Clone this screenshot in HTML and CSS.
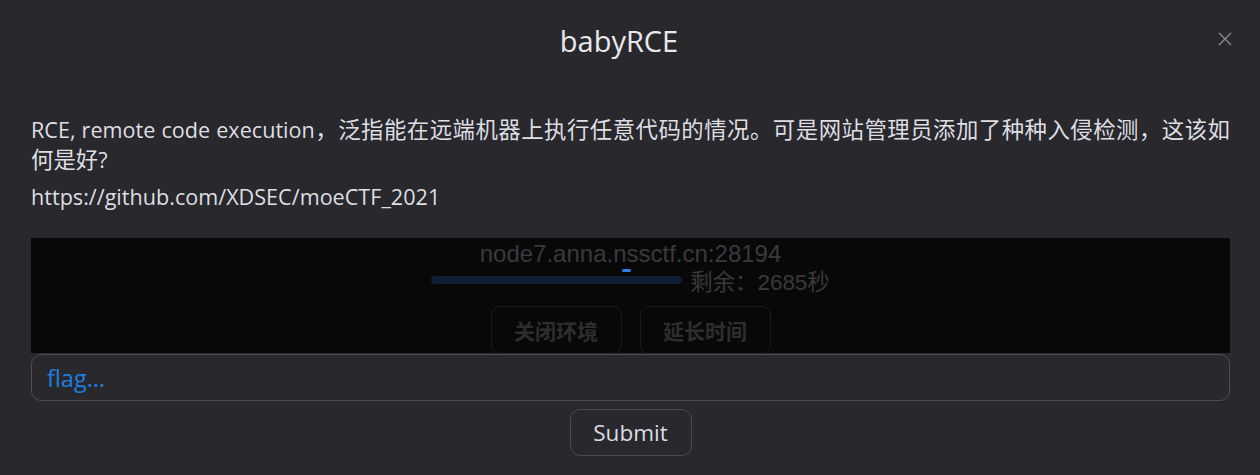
FILE: index.html
```html
<!DOCTYPE html>
<html lang="zh">
<head>
<meta charset="utf-8">
<title>babyRCE</title>
<link rel="stylesheet" href="styles.css">
</head>
<body>
<div class="modal">
  <header class="modal-head">
    <h1 class="title">babyRCE</h1>
    <button class="close" aria-label="close">
      <svg width="16" height="16" viewBox="0 0 16 16"><path d="M2 2L14 14M14 2L2 14" stroke="#8a8a90" stroke-width="1.4" fill="none"/></svg>
    </button>
  </header>
  <div class="desc">
    <p class="para">RCE, remote code execution<span class="zh">，泛指能在远端机器上执行任意代码的情况。可是网站管理员添加了种种入侵检测，这该如何是好</span>?</p>
    <p class="para link">https://github.com/XDSEC/moeCTF_2021</p>
  </div>
  <div class="env">
    <div class="host">node7.anna.nssctf.cn:28194</div>
    <div class="timer">
      <div class="bar"><span class="blip"></span></div>
      <span class="remain">剩余：2685秒</span>
    </div>
    <div class="env-actions">
      <button class="env-btn">关闭环境</button>
      <button class="env-btn">延长时间</button>
    </div>
  </div>
  <input class="flag" type="text" placeholder="flag…">
  <div class="submit-row">
    <button class="submit">Submit</button>
  </div>
</div>
</body>
</html>
```
FILE: styles.css
```css
html, body {
  margin: 0;
  padding: 0;
  background: #28282d;
  height: 100%;
  overflow: hidden;
}
.modal {
  padding: 0 30px 0 31px;
  font-family: "Open Sans", "Noto Sans CJK SC", sans-serif;
  color: #e3e3e8;
}
.modal-head {
  position: relative;
  height: 86px;
  display: flex;
  align-items: center;
  justify-content: center;
  padding-right: 23px;
}
.title {
  margin: 0;
  font-weight: 400;
  font-size: 29px;
  color: #e8e8ee;
  padding-bottom: 6px;
}
.close {
  position: absolute;
  right: -3px;
  top: 31px;
  background: none;
  border: 0;
  padding: 0;
  width: 16px;
  height: 16px;
  cursor: pointer;
}
.close svg { display: block; }
.desc {
  padding-top: 29px;
  font-size: 21.6px;
  line-height: 30px;
  color: #dedee3;
}
.para {
  margin: 0;
  text-align: justify;
}
.zh {
  font-size: 22.4px;
}
.link {
  margin-top: 7px;
}
.env {
  margin-top: 26px;
  height: 115px;
  overflow: hidden;
  background: #080808;
  display: flex;
  flex-direction: column;
  align-items: center;
}
.host {
  font-family: "Liberation Sans", Arial, sans-serif;
  font-size: 24px;
  line-height: 28px;
  color: #3a3a3c;
  padding-top: 2px;
}
.timer {
  display: flex;
  align-items: center;
  gap: 8px;
  height: 24px;
}
.bar {
  position: relative;
  width: 251px;
  height: 8px;
  border-radius: 4px;
  background: #0e1f33;
}
.blip {
  position: absolute;
  left: 191px;
  top: -7px;
  width: 9px;
  height: 3px;
  border-radius: 2px;
  background: #2f80e6;
}
.remain {
  font-family: "Liberation Sans", "Noto Sans CJK SC", sans-serif;
  font-size: 22.4px;
  color: #39393b;
}
.env-actions {
  display: flex;
  gap: 18px;
  margin-top: 14px;
}
.env-btn {
  width: 131px;
  height: 48px;
  background: transparent;
  border: 1px solid #1b1b1d;
  border-radius: 9px;
  color: #2e2e30;
  font-family: "Noto Sans CJK SC", sans-serif;
  font-weight: 700;
  font-size: 21px;
  padding: 0;
}
.flag {
  display: block;
  box-sizing: border-box;
  width: 100%;
  height: 47px;
  margin: 1px 0 0;
  background: #28282d;
  border: 1px solid #4d4d53;
  border-radius: 10px;
  padding: 0 15px;
  font-family: "Open Sans", sans-serif;
  font-size: 23.5px;
  color: #e3e3e8;
  outline: none;
}
.flag::placeholder {
  color: #1f7fe0;
  opacity: 1;
}
.submit-row {
  display: flex;
  justify-content: center;
  padding-top: 8px;
}
.submit {
  width: 122px;
  height: 47px;
  background: transparent;
  border: 1px solid #4a4a50;
  border-radius: 10px;
  color: #dcdce2;
  font-family: "Open Sans", sans-serif;
  font-size: 22.5px;
  padding: 0;
}
```
